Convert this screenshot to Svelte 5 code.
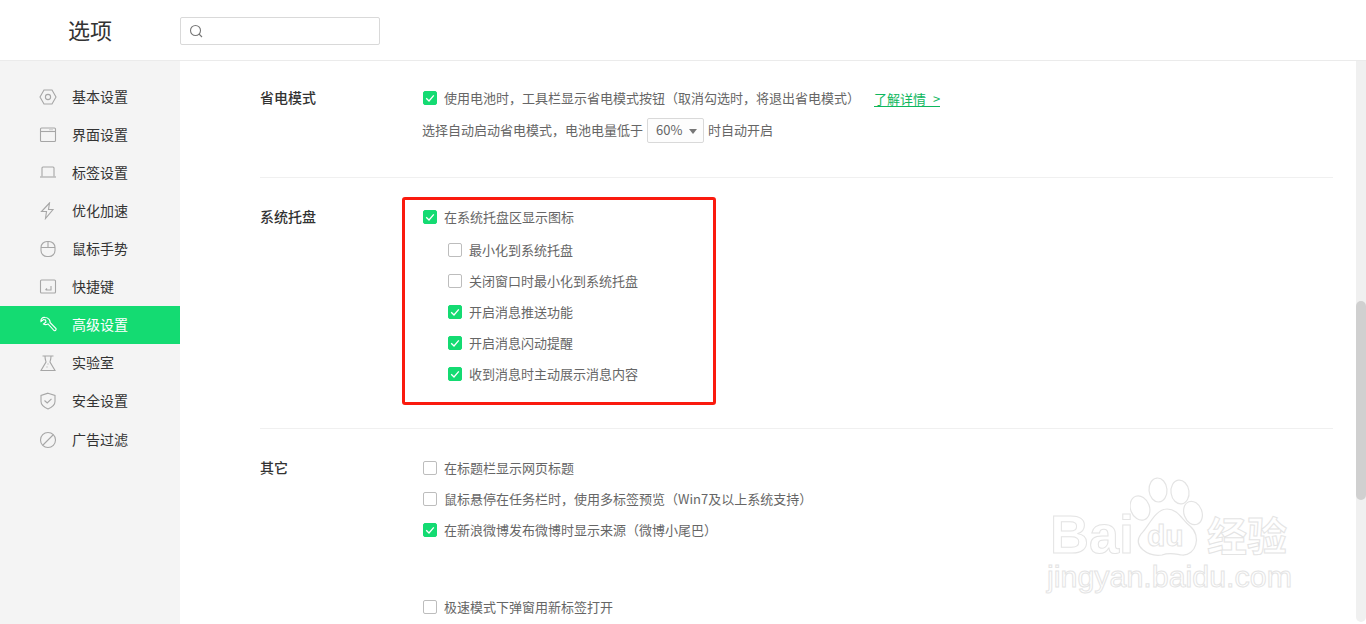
<script>
  const nav = [
    { name: '基本设置', icon: 'gear' },
    { name: '界面设置', icon: 'window' },
    { name: '标签设置', icon: 'tab' },
    { name: '优化加速', icon: 'bolt' },
    { name: '鼠标手势', icon: 'mouse' },
    { name: '快捷键', icon: 'key' },
    { name: '高级设置', icon: 'wrench', active: true },
    { name: '实验室', icon: 'flask' },
    { name: '安全设置', icon: 'shield' },
    { name: '广告过滤', icon: 'ban' }
  ];
  const tray = [
    { t: '最小化到系统托盘', c: false },
    { t: '关闭窗口时最小化到系统托盘', c: false },
    { t: '开启消息推送功能', c: true },
    { t: '开启消息闪动提醒', c: true },
    { t: '收到消息时主动展示消息内容', c: true }
  ];
  const other = [
    { t: '在标题栏显示网页标题', c: false },
    { t: '鼠标悬停在任务栏时，使用多标签预览（Win7及以上系统支持）', c: false },
    { t: '在新浪微博发布微博时显示来源（微博小尾巴）', c: true }
  ];
</script>

{#snippet box(checked)}
  <span class="box" class:checked>
    {#if checked}
      <svg width="14" height="14" viewBox="0 0 14 14"><path d="M3.2 7.2 L6 10 L10.8 4.4" fill="none" stroke="#fff" stroke-width="1.3"/></svg>
    {/if}
  </span>
{/snippet}

<div class="page">
  <header class="top">
    <h1>选项</h1>
    <div class="search">
      <svg width="16" height="16" viewBox="0 0 16 16" fill="none" stroke="#777" stroke-width="1.1"><circle cx="7.5" cy="7.5" r="5"/><path d="M11 11 L14 14"/></svg>
    </div>
  </header>
  <div class="body">
    <nav class="side">
      {#each nav as n}
        <div class="item" class:active={n.active}>
          <svg class="ico" width="18" height="18" viewBox="0 0 18 18" fill="none" stroke={n.active ? '#fff' : '#a6a6a6'} stroke-width="1.1">
            {#if n.icon === 'gear'}
              <path d="M5 2 H13 L17 9 L13 16 H5 L1 9 Z"/><circle cx="9" cy="9" r="2.6"/>
            {:else if n.icon === 'window'}
              <rect x="1.5" y="2" width="15" height="13.5" rx="1"/><path d="M1.5 5.5 H16.5"/><path d="M10.5 3.8 H11.5 M12.5 3.8 H13.5" />
            {:else if n.icon === 'tab'}
              <path d="M3 12.5 V4 Q3 3 4 3 H14 Q15 3 15 4 V12.5"/><path d="M1 13 H17"/>
            {:else if n.icon === 'bolt'}
              <path d="M10.5 1 L2.5 9.5 H7.5 L6.5 16.5 L14 7.5 H9.5 Z"/>
            {:else if n.icon === 'mouse'}
              <rect x="2" y="1.5" width="14" height="15" rx="6"/><path d="M2 7.5 H16 M9 1.5 V7.5"/>
            {:else if n.icon === 'key'}
              <rect x="1.5" y="2" width="15" height="13" rx="1"/><path d="M12 8 V12 H6.5 M8 10.5 L6.5 12"/>
            {:else if n.icon === 'wrench'}
              <path d="M6 1.5 C3.5 1 1.5 3 2 5.5 L4.5 3.5 L6.5 4 L7 6 L4.5 8 C6 9 8 8.5 9 8 L14.5 14 C15.5 15.5 17.5 14.5 17 12.5 L11 6.5 C11.5 4 9 1.5 6 1.5 Z"/>
            {:else if n.icon === 'flask'}
              <path d="M3.5 2 H14.5 M6 2 C6 6 7 7 7 8 L2 16.5 H16 L11 8 C11 7 12 6 12 2"/><path d="M8.5 10 H9.5 M7.5 13 H8.5" />
            {:else if n.icon === 'shield'}
              <path d="M9 1.2 L16 3.5 V9.5 C16 13 12.5 15.5 9 17 C5.5 15.5 2 13 2 9.5 V3.5 Z"/><path d="M5.5 8.5 L8.2 11 L12.5 6.8"/>
            {:else}
              <circle cx="9" cy="9" r="7.5"/><path d="M4 14 L14 4"/>
            {/if}
          </svg>
          <span class="label">{n.name}</span>
        </div>
      {/each}
    </nav>
    <main class="content">
      <section class="sec s1">
        <h2>省电模式</h2>
        <div class="opts">
          <div class="row">
            {@render box(true)}<span class="txt">使用电池时，工具栏显示省电模式按钮（取消勾选时，将退出省电模式）</span>
            <a class="more" href="#more">了解详情 &gt;</a>
          </div>
          <div class="row plain">
            <span class="txt">选择自动启动省电模式，电池电量低于</span>
            <span class="select">60%<i class="caret"></i></span>
            <span class="txt">时自动开启</span>
          </div>
        </div>
      </section>
      <section class="sec s2">
        <h2>系统托盘</h2>
        <div class="opts">
          <div class="row first">{@render box(true)}<span class="txt">在系统托盘区显示图标</span></div>
          {#each tray as r}
            <div class="row sub">{@render box(r.c)}<span class="txt">{r.t}</span></div>
          {/each}
        </div>
      </section>
      <section class="sec s3">
        <h2>其它</h2>
        <div class="opts">
          {#each other as r}
            <div class="row">{@render box(r.c)}<span class="txt">{r.t}</span></div>
          {/each}
          <div class="row far">{@render box(false)}<span class="txt">极速模式下弹窗用新标签打开</span></div>
        </div>
      </section>
    </main>
  </div>

  <div class="track"><div class="thumb"></div></div>
  <div class="redbox"></div>
  <div class="mark">
    <svg class="paw" width="90" height="90" viewBox="0 0 90 90" fill="#fff" stroke="#e4e4e4" stroke-width="1.2">
      <ellipse cx="28" cy="14" rx="9" ry="12" transform="rotate(-5 28 14)"/>
      <ellipse cx="50" cy="16" rx="9" ry="12" transform="rotate(-8 50 16)"/>
      <ellipse cx="10" cy="32" rx="9.5" ry="12.5" transform="rotate(-20 10 32)"/>
      <ellipse cx="63" cy="37" rx="9" ry="12" transform="rotate(-20 63 37)"/>
      <path d="M37 33 C48 33 52 44 60 50 C72 60 66 80 52 79 C45 78 40 76 32 79 C18 81 2 70 11 58 C18 52 25 33 37 33 Z"/>
    </svg>
    <span class="bai">Bai</span><span class="du">du</span><span class="jy">经验</span>
    <span class="url">jingyan.baidu.com</span>
  </div>
</div>

<style>
  :global(body) { margin: 0; background: #fff; }
  .page {
    position: relative; width: 1366px; height: 624px; overflow: hidden; background: #fff;
    font-family: "Noto Sans CJK SC", "Liberation Sans", sans-serif; color: #333;
  }
  .top {
    height: 60px; border-bottom: 1px solid #ebebeb; display: flex; align-items: center;
  }
  h1 { margin: 0 0 2px 68px; width: 112px; font-size: 22px; font-weight: 400; color: #333; line-height: 56px; }
  .search {
    box-sizing: border-box; width: 200px; height: 28px; margin-top: 2px; border: 1px solid #d9d9d9; border-radius: 2px;
    display: flex; align-items: center; padding-left: 7px;
  }
  .body { display: flex; height: 563px; }
  .side { width: 180px; background: #f4f4f4; padding-top: 17px; box-sizing: border-box; flex: none; }
  .item {
    height: 38px; display: flex; align-items: center; padding-left: 39px; font-size: 14px; color: #333;
  }
  .label { padding-bottom: 2px; }
  .item:last-child { margin-top: 1px; }
  .ico { flex: none; margin-right: 15px; }
  .item.active { background: #14db72; color: #fff; }
  .content { flex: 1; padding: 0 33px 0 80px; min-width: 0; font-size: 13px; color: #666; }
  .sec { display: flex; border-bottom: 1px solid #f0f0f0; }
  .sec:last-child { border-bottom: 0; }
  .s1 { padding: 22px 0 32px; }
  .s2 { padding: 24px 0 38px; }
  .s3 { padding: 24px 0 0; }
  h2 { margin: 0; width: 163px; flex: none; font-size: 14px; font-weight: 500; color: #333; line-height: 28px; }
  .opts { flex: 1; }
  .row { height: 30px; display: flex; align-items: center; margin-bottom: 1px; }
  .txt { padding-bottom: 2px; }
  .row.plain { margin: 2px 0 0 -1px; }
  .row.first { margin-bottom: 3px; }
  .row.sub { padding-left: 25px; }
  .row.far { margin-top: 47px; }
  .box {
    box-sizing: border-box; width: 14px; height: 14px; border: 1px solid #bdbdbd; border-radius: 2px;
    margin-right: 7px; flex: none; background: #fff; display: block; position: relative;
  }
  .box.checked { background: #14db72; border-color: #14db72; }
  .box svg { position: absolute; left: -1px; top: -1px; }
  .more { color: #0eb75e; margin: 2px 0 0 14px; text-decoration: none; border-bottom: 1px solid #0eb75e; line-height: 15px; word-spacing: 4px; }
  .select {
    box-sizing: border-box; width: 57px; height: 25px; margin: 0 4px; border: 1px solid #d9d9d9; border-radius: 2px;
    display: flex; align-items: center; padding: 0 0 2px 8px; position: relative; color: #666; background: #fdfdfd;
  }
  .caret {
    position: absolute; right: 6px; top: 10px; width: 0; height: 0;
    border-left: 4.5px solid transparent; border-right: 4.5px solid transparent; border-top: 5px solid #777;
  }
  .track { position: absolute; left: 1356px; top: 61px; width: 10px; height: 561px; background: #f0f0f0; border-radius: 0 0 5px 5px; }
  .thumb { position: absolute; left: 0; top: 240px; width: 10px; height: 199px; background: #d0d0d0; border-radius: 5px; }
  .redbox {
    position: absolute; left: 402px; top: 197px; width: 314px; height: 208px; box-sizing: border-box;
    border: 3px solid #fa1a0e; border-radius: 3px;
  }
  .mark { position: absolute; left: 1040px; top: 470px; width: 260px; height: 130px; pointer-events: none; }
  .paw { position: absolute; left: 90px; top: 6px; }
  .bai, .du, .jy, .url {
    position: absolute; color: #fff; -webkit-text-stroke: 1px #e4e4e4; white-space: nowrap;
    font-family: "Liberation Sans", sans-serif;
  }
  .bai { left: 10px; top: 41px; font-size: 54px; font-weight: 700; line-height: 46px; }
  .du { left: 107px; top: 48px; font-size: 30px; line-height: 36px; font-weight: 700; }
  .jy { left: 167px; top: 42px; font-size: 40px; line-height: 44px; font-weight: 700; font-family: "Noto Sans CJK SC", sans-serif; }
  .url { left: 7px; top: 89px; font-size: 30.4px; line-height: 34px; }
</style>
